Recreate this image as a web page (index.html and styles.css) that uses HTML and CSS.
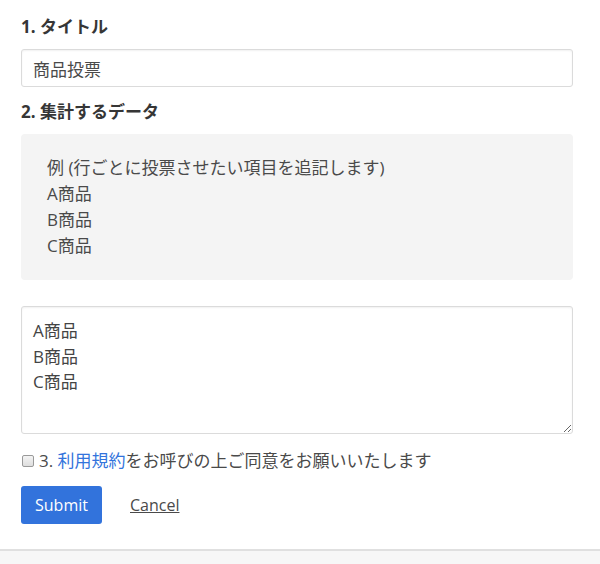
FILE: index.html
```html
<!DOCTYPE html>
<html lang="ja">
<head>
<meta charset="utf-8">
<link rel="stylesheet" href="styles.css">
</head>
<body>
<div class="page">
  <form class="form">
    <div class="field">
      <label class="label">1. タイトル</label>
      <input class="input" type="text" value="商品投票">
    </div>
    <div class="field">
      <label class="label">2. 集計するデータ</label>
      <div class="example">例 (行ごとに投票させたい項目を追記します)<br>A商品<br>B商品<br>C商品</div>
    </div>
    <div class="field field-area">
      <textarea class="textarea">A商品
B商品
C商品</textarea>
    </div>
    <div class="check">
      <span class="checkbox"></span>
      <span>3. <a href="#" class="link">利用規約</a>をお呼びの上ご同意をお願いいたします</span>
    </div>
    <div class="actions">
      <button type="button" class="btn">Submit</button>
      <a href="#" class="cancel">Cancel</a>
    </div>
  </form>
  <div class="footer"></div>
</div>
</body>
</html>
```

FILE: styles.css
```css
html, body {
  margin: 0;
  padding: 0;
  background: #fff;
}
body {
  font-family: "Open Sans", "Noto Sans CJK JP", sans-serif;
  font-size: 17px;
  color: #444;
}
.page {
  display: flex;
  flex-direction: column;
  min-height: 564px;
}
.form {
  padding: 14px 27px 0 21px;
  display: flex;
  flex-direction: column;
}
.field {
  display: flex;
  flex-direction: column;
}
.label {
  font-weight: bold;
  color: #363636;
  font-size: 17px;
  line-height: 26px;
  margin-bottom: 9px;
}
.input {
  box-sizing: border-box;
  height: 38px;
  border: 1px solid #dbdbdb;
  border-radius: 3px;
  box-shadow: inset 0 1px 2px rgba(10,10,10,0.06);
  padding: 0 11px;
  font: inherit;
  color: #4a4a4a;
  margin-bottom: 12px;
}
.example {
  background: #f4f4f4;
  border-radius: 4px;
  padding: 21px 26px;
  line-height: 26px;
  color: #4a4a4a;
  margin-bottom: 26px;
}
.textarea {
  box-sizing: border-box;
  height: 128px;
  border: 1px solid #dbdbdb;
  border-radius: 3px;
  box-shadow: inset 0 1px 2px rgba(10,10,10,0.06);
  padding: 11px 11px;
  font: inherit;
  line-height: 25.5px;
  color: #444;
  resize: vertical;
}
.check {
  display: flex;
  align-items: center;
  gap: 5px;
  margin-top: 14px;
  line-height: 26px;
  color: #4a4a4a;
}
.checkbox {
  box-sizing: border-box;
  margin-left: 1px;
  width: 12px;
  height: 12px;
  border: 1px solid #9a9a9a;
  border-radius: 2px;
  background: linear-gradient(#f4f4f4, #dedede);
}
.link {
  color: #3273dc;
  text-decoration: none;
}
.actions {
  display: flex;
  align-items: center;
  gap: 28px;
  margin-top: 12px;
}
.btn {
  width: 81px;
  height: 38px;
  background: #3273dc;
  color: #fff;
  border: none;
  border-radius: 3px;
  font: inherit;
  font-size: 16px;
}
.cancel {
  color: #4a4a4a;
  text-decoration: underline;
  font-size: 16px;
}
.footer {
  margin-top: 25px;
  flex: 1;
  background: #f7f7f7;
  border-top: 2px solid #e0e0e0;
}
```
